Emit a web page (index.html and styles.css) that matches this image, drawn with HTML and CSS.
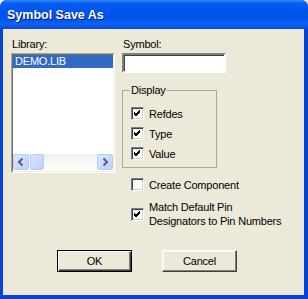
FILE: index.html
```html
<!doctype html>
<html lang="en">
  <head>
    <title>Symbol Save As</title>
    <link rel="stylesheet" href="styles.css">
  </head>
  <body>
    <div class="window">
      <div class="titlebar">
        <span class="title">Symbol Save As</span>
      </div>
      <div class="client">
        <div class="columns">
          <div class="left-col">
            <div class="label">Library:</div>
            <div class="listbox">
              <div class="list-items">
                <div class="list-item selected">DEMO.LIB</div>
              </div>
              <div class="hscroll">
                <div class="sb-btn">
                  <svg width="14" height="14" viewBox="0 0 14 14">
                    <path d="M8.5 3.5 L5 7 L8.5 10.5" fill="none" stroke="#4d6185" stroke-width="2"/>
                  </svg>
                </div>
                <div class="sb-thumb"></div>
                <div class="sb-track"></div>
                <div class="sb-btn">
                  <svg width="14" height="14" viewBox="0 0 14 14">
                    <path d="M5.5 3.5 L9 7 L5.5 10.5" fill="none" stroke="#4d6185" stroke-width="2"/>
                  </svg>
                </div>
              </div>
            </div>
          </div>
          <div class="right-col">
            <div class="label">Symbol:</div>
            <div class="textbox"></div>
            <div class="group">
              <span class="legend">Display</span>
              <div class="check-row">
                <span class="checkbox checked"></span>
                <span>Refdes</span>
              </div>
              <div class="check-row">
                <span class="checkbox checked"></span>
                <span>Type</span>
              </div>
              <div class="check-row">
                <span class="checkbox checked"></span>
                <span>Value</span>
              </div>
            </div>
            <div class="check-row create">
              <span class="checkbox"></span>
              <span>Create Component</span>
            </div>
            <div class="check-row multi">
              <span class="checkbox checked"></span>
              <span>Match Default Pin<br>Designators to Pin Numbers</span>
            </div>
          </div>
        </div>
        <div class="buttons">
          <div class="button default">OK</div>
          <div class="button">Cancel</div>
        </div>
      </div>
    </div>
  </body>
</html>
```

FILE: styles.css
```css
body {
  margin: 0;
  background: #ece9d8;
  font-family: "Liberation Sans", Arial, sans-serif;
  font-size: 11px;
  letter-spacing: -0.2px;
  color: #000;
}

.window {
  width: 308px;
  height: 299px;
  box-sizing: border-box;
  background: #0842d8;
  border-radius: 7px 7px 0 0;
  display: flex;
  flex-direction: column;
  overflow: hidden;
}

.titlebar {
  height: 29px;
  flex: none;
  background: linear-gradient(#2f8bff 0px, #0a5ff0 3px, #0058ee 8px, #0053e8 18px, #0a62f6 24px, #0a4ad6 29px);
  display: flex;
  align-items: center;
}

.title {
  margin-left: 7px;
  margin-top: 1px;
  color: #fff;
  font-weight: bold;
  font-size: 12.5px;
  letter-spacing: 0;
  text-shadow: 1px 1px 0 #0a1883;
}

.client {
  flex: 1;
  margin: 0 4px 4px 3px;
  background: #ece9d8;
  display: flex;
  flex-direction: column;
}

.columns {
  display: flex;
}

.left-col {
  margin-left: 8px;
  width: 104px;
}

.right-col {
  margin-left: 7px;
}

.label {
  height: 13px;
  line-height: 13px;
  margin-top: 9px;
  margin-left: 1px;
  margin-bottom: 2px;
}

.listbox {
  width: 104px;
  height: 120px;
  box-sizing: border-box;
  border: 1px solid;
  border-color: #aca899 #fff #fff #aca899;
  background: #fff;
  display: flex;
  flex-direction: column;
}

.list-items {
  flex: 1;
  border: 1px solid;
  border-color: #716f64 #f1efe2 transparent #716f64;
  border-bottom: none;
}

.list-item {
  height: 13px;
  line-height: 13px;
  padding-left: 2px;
}

.list-item.selected {
  background: #316ac5;
  color: #fff;
}

.hscroll {
  height: 17px;
  display: flex;
  background: linear-gradient(#f3f1ec, #fefefb);
  border-left: 1px solid #716f64;
  border-right: 1px solid #f1efe2;
  border-bottom: 1px solid #f1efe2;
}

.sb-btn,
.sb-thumb {
  width: 16px;
  height: 16px;
  box-sizing: border-box;
  border: 1px solid #b8cbf5;
  border-radius: 2px;
  background: linear-gradient(135deg, #dbe6fe, #bcd0fb);
  display: flex;
}

.sb-thumb {
  width: 14px;
  margin-left: 1px;
}

.sb-track {
  flex: 1;
}

.textbox {
  width: 104px;
  height: 20px;
  box-sizing: border-box;
  border: 2px solid;
  border-color: #808080 #fff #fff #808080;
  background: #fff;
  box-shadow: inset 1px 1px 0 #404040;
}

.group {
  position: relative;
  width: 95px;
  height: 78px;
  box-sizing: border-box;
  margin-top: 17px;
  padding: 16px 0 0 8px;
  border: 1px solid #aca899;
}

.legend {
  position: absolute;
  top: -7px;
  left: 7px;
  padding: 0 1px;
  line-height: 13px;
  background: #ece9d8;
}

.check-row {
  display: flex;
  align-items: center;
  height: 13px;
  gap: 5px;
}

.group .check-row {
  margin-bottom: 7px;
}

.check-row.create {
  margin: 10px 0 0 9px;
}

.check-row.multi {
  margin: 9px 0 0 9px;
  line-height: 14px;
  height: 28px;
}

.checkbox {
  width: 13px;
  height: 13px;
  box-sizing: border-box;
  flex: none;
  background: #fff;
  border: 1px solid;
  border-color: #808080 #fff #fff #808080;
  box-shadow: inset 1px 1px 0 #404040, inset -1px -1px 0 #d4d0c8;
}

.checkbox.checked {
  background: #fff url("data:image/svg+xml,%3Csvg xmlns='http://www.w3.org/2000/svg' width='11' height='11'%3E%3Cpath d='M2 5 L4 7 L8 3 M2 6 L4 8 L8 4 M2 4 L4 6 L8 2' fill='none' stroke='%23000' stroke-width='1'/%3E%3C/svg%3E") no-repeat 0 0;
}

.buttons {
  display: flex;
  margin-top: auto;
  margin-bottom: 23px;
  margin-left: 54px;
  gap: 30px;
}

.button {
  width: 75px;
  height: 22px;
  box-sizing: border-box;
  border: 1px solid;
  border-color: #fff #404040 #404040 #fff;
  box-shadow: inset -1px -1px 0 #808080, inset 1px 1px 0 #f5f4ee;
  display: flex;
  align-items: center;
  justify-content: center;
}

.button.default {
  border: 1px solid #000;
  box-shadow: inset 1px 1px 0 #fff, inset -1px -1px 0 #404040, inset -2px -2px 0 #808080;
}
```
